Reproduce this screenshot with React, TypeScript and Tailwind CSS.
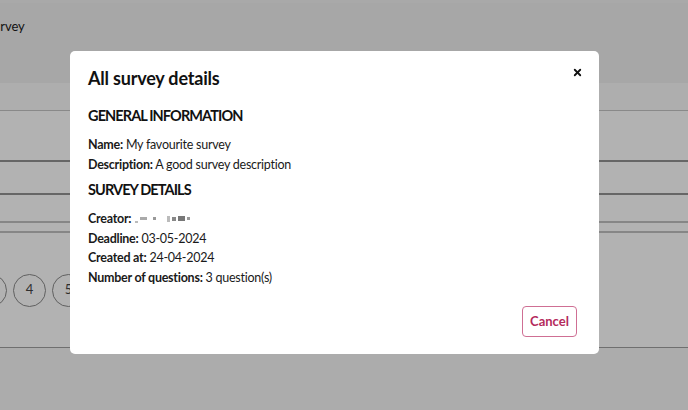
import { X } from 'lucide-react';

export default function App() {
  const general = [
    { label: 'Name:', value: 'My favourite survey' },
    { label: 'Description:', value: 'A good survey description' },
  ];

  const details = [
    { label: 'Deadline:', value: '03-05-2024' },
    { label: 'Created at:', value: '24-04-2024' },
    { label: 'Number of questions:', value: '3 question(s)' },
  ];

  return (
    <div className="relative h-[410px] w-[688px] overflow-hidden bg-white font-['Lato',sans-serif] text-[#1a1a1a]">
      {/* page behind the dialog */}
      <div className="h-[3px] bg-[#f3f3f3]" />
      <div className="flex h-[80px] items-start bg-[#f0f0f0] pt-[14px]">
        <span className="-ml-[14px] text-[13px]">Survey</span>
      </div>
      <div className="h-[27px] bg-[#f9f9f9]" />
      <div className="h-[50px] border-t border-[#c4c4c4]" />
      <div className="h-[33px] border-t-2 border-[#929292]" />
      <div className="h-[28px] border-t-2 border-[#929292]" />
      <div className="h-[12px] border-y-2 border-[#c0c0c0]" />
      <div className="-ml-[26px] flex h-[114px] items-center gap-[6px]">
        {[3, 4, 5, 6, 7].map((n) => (
          <div key={n} className="flex h-[33px] w-[33px] shrink-0 items-center justify-center rounded-full border border-[#8a8a8a] text-[13px] text-[#444]">
            {n}
          </div>
        ))}
      </div>
      <div className="h-[63px] border-t border-[#a0a0a0] bg-[#f7f7f7]" />

      {/* overlay */}
      <div className="absolute inset-0 bg-black/30">
        <div className="ml-[70px] mt-[51px] flex h-[303px] w-[529px] flex-col rounded-[5px] bg-white px-[18px] pt-[14px] pb-[17px]">
          <div className="flex items-start justify-between">
            <h2 className="text-[18px] font-bold leading-[26px] tracking-[-0.2px] text-[#111]">All survey details</h2>
            <X className="-mr-[2px] mt-[2px] h-[11px] w-[11px] text-[#111]" strokeWidth={4} />
          </div>
          <h3 className="mt-[14px] text-[14.5px] font-bold leading-[22px] tracking-[-0.9px] text-[#111]">GENERAL INFORMATION</h3>
          <div className="mt-[8px] flex flex-col text-[12.5px] leading-[19.5px] tracking-[-0.25px]">
            {general.map((row) => (
              <p key={row.label}>
                <span className="font-bold">{row.label}</span> {row.value}
              </p>
            ))}
          </div>
          <h3 className="mt-[5px] text-[14.5px] font-bold leading-[22px] tracking-[-0.9px] text-[#111]">SURVEY DETAILS</h3>
          <div className="mt-[8px] flex flex-col text-[12.5px] leading-[19.5px] tracking-[-0.25px]">
            <div className="flex h-[19.5px] items-center">
              <span className="font-bold">Creator:</span>
              <span className="ml-[4px] flex items-center gap-[2px]">
                <span className="mt-[6px] h-[2px] w-[3px] bg-[#bbb]" />
                <span className="h-[3px] w-[7px] bg-[#aaa]" />
                <span className="ml-[4px] h-[3px] w-[3px] bg-[#999]" />
                <span className="ml-[9px] h-[6px] w-[3px] bg-[#bbb]" />
                <span className="h-[4px] w-[4px] bg-[#888]" />
                <span className="h-[5px] w-[7px] bg-[#777]" />
                <span className="h-[3px] w-[3px] bg-[#999]" />
              </span>
            </div>
            {details.map((row) => (
              <p key={row.label}>
                <span className="font-bold">{row.label}</span> {row.value}
              </p>
            ))}
          </div>
          <div className="mt-auto flex justify-end pr-[4px]">
            <button className="h-[31px] w-[55px] rounded-[4px] border border-[#cf6f94] text-[13px] font-bold text-[#b42a5c]">
              Cancel
            </button>
          </div>
        </div>
      </div>
    </div>
  );
}
